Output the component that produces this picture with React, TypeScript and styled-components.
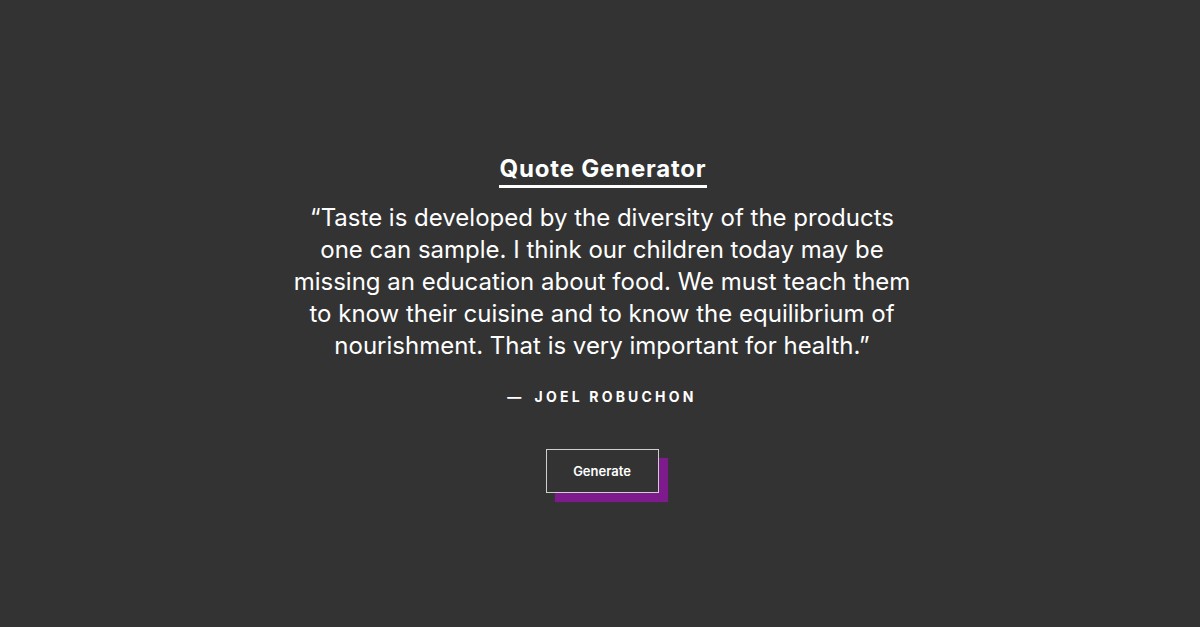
import React from "react";
import styled, { createGlobalStyle } from "styled-components";

const Global = createGlobalStyle`
  html, body { margin: 0; padding: 0; background: #333333; }
  body { font-family: Inter, "Noto Sans", "Liberation Sans", sans-serif; color: #ffffff; }
`;

const Page = styled.main`
  width: 1200px;
  height: 627px;
  box-sizing: border-box;
  padding: 154px 0 0 4px;
  display: flex;
  flex-direction: column;
  align-items: center;
`;

const Title = styled.h1`
  margin: 0 0 0 2px;
  font-size: 24px;
  font-weight: 700;
  letter-spacing: 0.8px;
  line-height: 30px;
  padding: 0 1px 1px;
  border-bottom: 3px solid #ffffff;
`;

const Quote = styled.blockquote`
  margin: 14px 0 0;
  width: 622px;
  text-align: center;
  font-size: 24px;
  line-height: 32px;
  font-weight: 400;
`;

const Author = styled.p`
  margin: 25px 0 0;
  font-size: 14px;
  font-weight: 700;
  letter-spacing: 3.2px;
  text-transform: uppercase;
  line-height: 20px;
`;

const Dash = styled.span`
  margin-right: 10px;
`;

const Button = styled.button`
  margin-top: 42px;
  width: 113px;
  height: 44px;
  background: #333333;
  color: #ffffff;
  border: 1px solid #cfcfcf;
  font-family: inherit;
  font-size: 13px;
  font-weight: 600;
  box-shadow: 9px 9px 1px #7d1a8c;
  cursor: pointer;
`;

export default function App() {
  return (
    <>
      <Global />
      <Page>
        <Title>Quote Generator</Title>
        <Quote>
          “Taste is developed by the diversity of the products one can sample. I think our children today may be missing an education about food. We must teach them to know their cuisine and to know the equilibrium of nourishment. That is very important for health.”
        </Quote>
        <Author>
          <Dash>—</Dash>Joel Robuchon
        </Author>
        <Button type="button">Generate</Button>
      </Page>
    </>
  );
}
